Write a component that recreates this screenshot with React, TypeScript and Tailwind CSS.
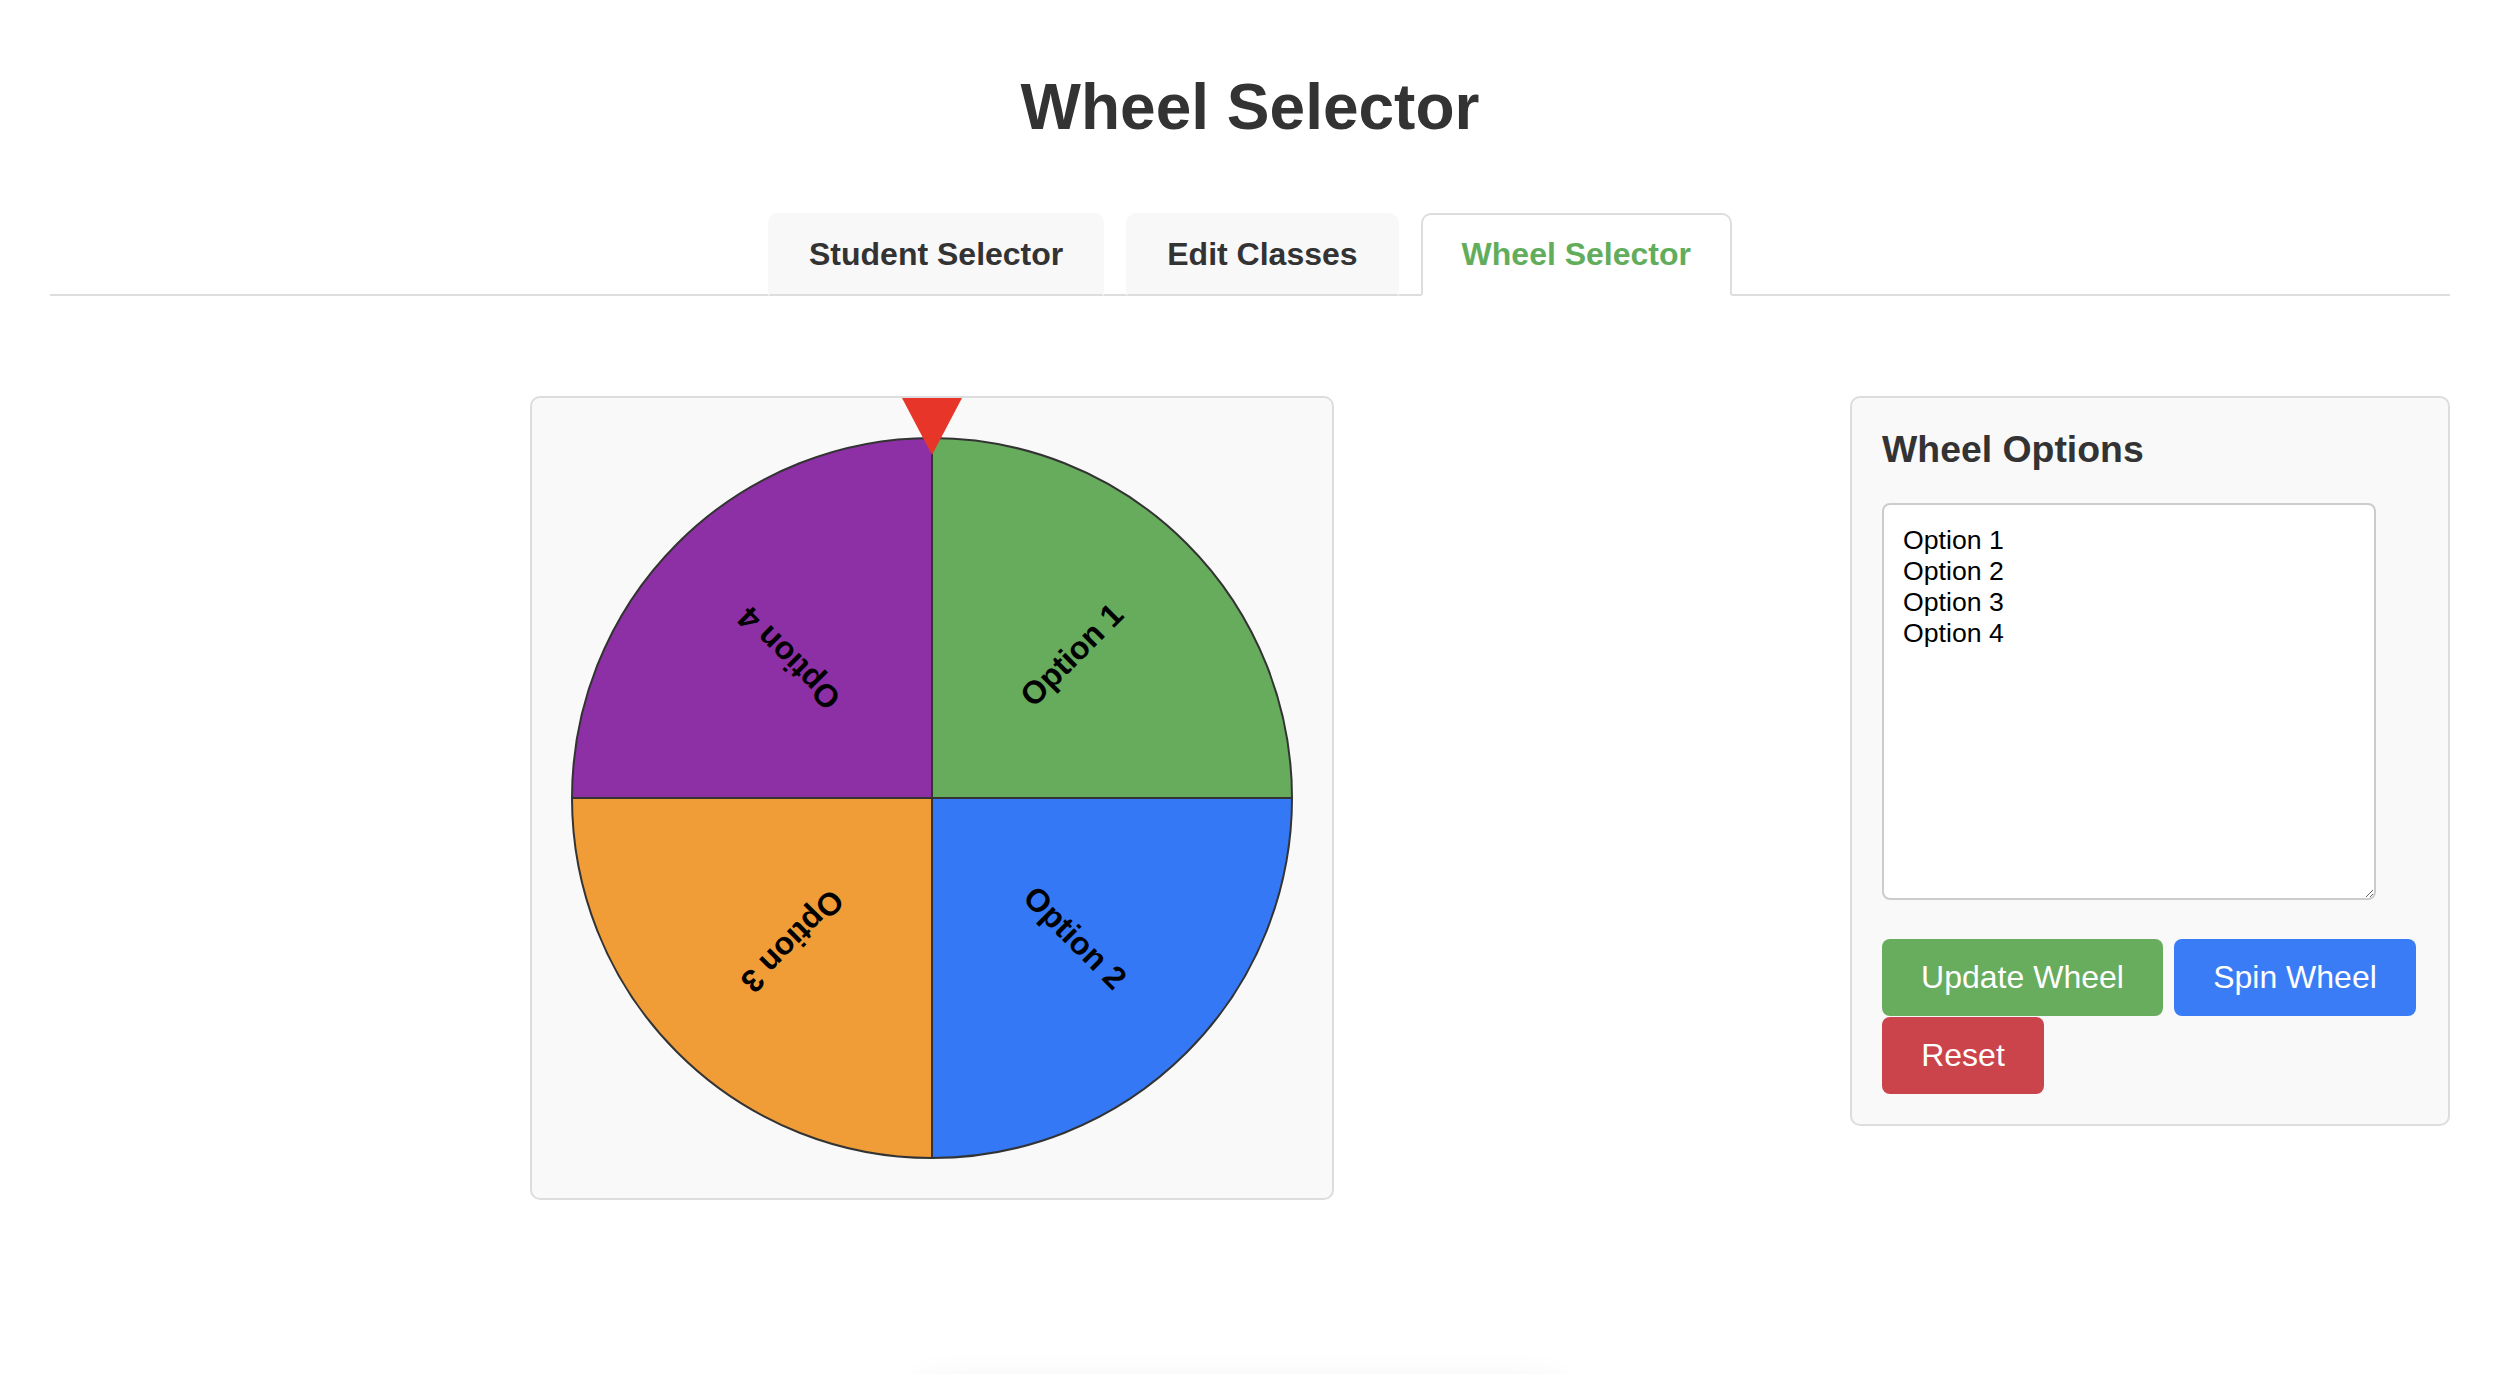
import React from 'react';

const OPTIONS = ['Option 1', 'Option 2', 'Option 3', 'Option 4'];
const COLORS = ['#67ab5d', '#3478f5', '#f09d38', '#8e30a5'];

const TABS = [
  { label: 'Student Selector', active: false },
  { label: 'Edit Classes', active: false },
  { label: 'Wheel Selector', active: true },
];

function Wheel({ options }: { options: string[] }) {
  const size = 722;
  const c = size / 2;
  const r = c - 1;
  const arc = (Math.PI * 2) / options.length;

  return (
    <svg width={size} height={size} viewBox={`0 0 ${size} ${size}`} className="block">
      {options.map((opt, i) => {
        const start = -Math.PI / 2 + i * arc;
        const end = start + arc;
        const x1 = c + r * Math.cos(start);
        const y1 = c + r * Math.sin(start);
        const x2 = c + r * Math.cos(end);
        const y2 = c + r * Math.sin(end);
        const large = arc > Math.PI ? 1 : 0;
        return (
          <path
            key={opt}
            d={`M ${c} ${c} L ${x1} ${y1} A ${r} ${r} 0 ${large} 1 ${x2} ${y2} Z`}
            fill={COLORS[i % COLORS.length]}
            stroke="#333"
            strokeWidth={2}
          />
        );
      })}
      {options.map((opt, i) => {
        const mid = ((-Math.PI / 2 + i * arc + arc / 2) * 180) / Math.PI;
        return (
          <text
            key={opt + '-label'}
            transform={`translate(${c} ${c}) rotate(${mid}) translate(200 0)`}
            textAnchor="middle"
            dominantBaseline="middle"
            fontFamily="'Liberation Sans', Arial, sans-serif"
            fontWeight="bold"
            fontSize={32}
            fill="#000"
          >
            {opt}
          </text>
        );
      })}
    </svg>
  );
}

export default function App() {
  return (
    <div className="min-h-screen bg-white font-['Liberation_Sans',Arial,sans-serif] text-[#333] overflow-hidden">
      <div className="w-[2400px] mx-auto">
        <h1 className="pt-[70px] text-center text-[64px] font-bold leading-[normal]">Wheel Selector</h1>

        {/* Tabs */}
        <div className="mt-[69px] flex justify-center gap-[22px] border-b-2 border-[#ddd]">
          {TABS.map((tab) => (
            <div
              key={tab.label}
              className={
                tab.active
                  ? '-mb-[2px] rounded-t-[10px] border-2 border-[#ddd] border-b-white bg-white px-[39px] py-[21px] text-[32px] font-bold leading-[normal] text-[#62ad5b]'
                  : '-mb-[2px] rounded-t-[10px] border-2 border-transparent border-b-[#ddd] bg-[#f8f8f8] px-[39px] py-[21px] text-[32px] font-bold leading-[normal] text-[#333]'
              }
            >
              {tab.label}
            </div>
          ))}
        </div>

        {/* Content */}
        <div className="mt-[100px] flex items-start gap-[40px]">
          <div className="flex flex-1 justify-center pl-[4px]">
            <div className="relative rounded-[10px] border-2 border-[#ddd] bg-[#f9f9f9] p-[39px]">
              <Wheel options={OPTIONS} />
              <div className="absolute left-1/2 top-0 h-0 w-0 -translate-x-1/2 border-l-[30px] border-r-[30px] border-t-[57px] border-l-transparent border-r-transparent border-t-[#e8352a]" />
            </div>
          </div>

          <div className="w-[600px] rounded-[10px] border-2 border-[#ddd] bg-[#f9f9f9] p-[30px]">
            <h3 className="mb-[32px] text-[37.4px] font-bold leading-[normal] text-[#333]">Wheel Options</h3>
            <textarea
              className="block h-[397px] w-[494px] rounded-[8px] border-2 border-[#ccc] bg-white px-[19px] py-[20px] text-[26.67px] leading-[normal] text-black outline-none"
              defaultValue={OPTIONS.join('\n')}
            />
            <div className="mt-[39px] flex flex-wrap gap-x-[11px] gap-y-[1px]">
              <button className="w-[281px] rounded-[8px] bg-[#68ac5e] py-[20px] text-center text-[32px] leading-[normal] text-white">
                Update Wheel
              </button>
              <button className="w-[242px] rounded-[8px] bg-[#3a7cf6] py-[20px] text-center text-[32px] leading-[normal] text-white">
                Spin Wheel
              </button>
              <button className="w-[162px] rounded-[8px] bg-[#cc444b] py-[20px] text-center text-[32px] leading-[normal] text-white">
                Reset
              </button>
            </div>
          </div>
        </div>

        {/* result box below the fold */}
        <div className="mx-auto mt-[185px] h-[200px] w-[640px] -translate-x-[10px] rounded-[10px] bg-white shadow-[0_0_40px_rgba(0,0,0,0.07)]" />
      </div>
    </div>
  );
}
